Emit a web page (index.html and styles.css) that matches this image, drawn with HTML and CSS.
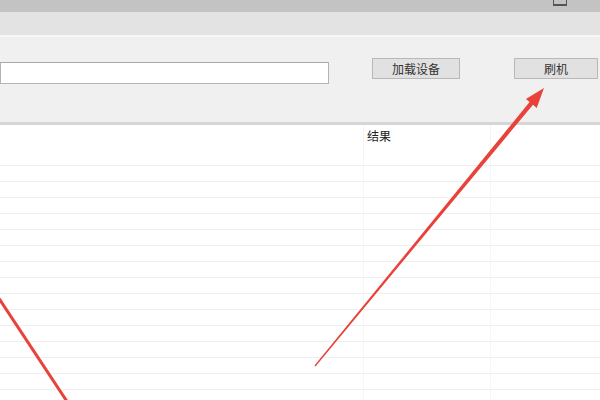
FILE: index.html
```html
<!DOCTYPE html>
<html lang="zh-CN">
<head>
    <meta charset="UTF-8">
    <meta name="viewport" content="width=device-width, initial-scale=1.0">
    <title>刷机工具</title>
    <link rel="stylesheet" href="styles.css">
</head>
<body>

<div class="window">
    <div class="titlebar">
        <span class="max-btn"></span>
    </div>
    <div class="menubar"></div>

    <div class="panel">
        <input type="text" class="path-input">
        <button class="btn btn-load">加载设备</button>
        <button class="btn btn-flash">刷机</button>
    </div>

    <table class="results">
        <thead>
            <tr>
                <th class="col-main"></th>
                <th class="col-result">结果</th>
                <th class="col-extra"></th>
            </tr>
        </thead>
        <tbody>
            <!-- linhas vazias -->
            <tr><td></td><td></td><td></td></tr>
            <tr><td></td><td></td><td></td></tr>
            <tr><td></td><td></td><td></td></tr>
            <tr><td></td><td></td><td></td></tr>
            <tr><td></td><td></td><td></td></tr>
            <tr><td></td><td></td><td></td></tr>
            <tr><td></td><td></td><td></td></tr>
            <tr><td></td><td></td><td></td></tr>
            <tr><td></td><td></td><td></td></tr>
            <tr><td></td><td></td><td></td></tr>
            <tr><td></td><td></td><td></td></tr>
            <tr><td></td><td></td><td></td></tr>
            <tr><td></td><td></td><td></td></tr>
            <tr><td></td><td></td><td></td></tr>
            <tr><td></td><td></td><td></td></tr>
        </tbody>
    </table>

    <!-- setas vermelhas por cima da janela -->
    <svg class="arrows" width="600" height="400" viewBox="0 0 600 400">
        <polygon points="314.5,365.6 529.6,102 525.9,99 544,88 536.7,107.9 533,104.8 315.5,366.4" fill="#e8423a"/>
        <line x1="-6" y1="291" x2="70" y2="406" stroke="#e8423a" stroke-width="3"/>
    </svg>
</div>

</body>
</html>
```

FILE: styles.css
```css
body {
    margin: 0;
    font-family: "Noto Sans CJK SC", "Liberation Sans", sans-serif;
    background-color: #ffffff;
    color: #222222;
}
.window {
    position: relative;
    width: 600px;
    height: 400px;
    overflow: hidden;
    background-color: #ffffff;
}
.titlebar {
    height: 12px;
    background-color: #c3c3c3;
    display: flex;
    justify-content: flex-end;
    overflow: hidden;
}
.max-btn {
    width: 12px;
    height: 10px;
    margin-top: -7px;
    margin-right: 33px;
    border: 1px solid #555555;
    border-bottom-width: 2px;
}
.menubar {
    height: 23px;
    background-color: #e3e3e3;
    border-bottom: 2px solid #f7f7f7;
}
.panel {
    height: 88px;
    background-color: #f0f0f0;
    border-bottom: 3px solid #d6d6d6;
    display: flex;
    align-items: flex-start;
    box-sizing: border-box;
}
.path-input {
    width: 329px;
    height: 22px;
    margin-top: 25px;
    padding: 0;
    box-sizing: border-box;
    border: 1px solid #b4b4b4;
    border-top-color: #a8a8a8;
    background-color: #ffffff;
    outline: none;
}
.btn {
    height: 21px;
    margin-top: 21px;
    padding: 0;
    box-sizing: border-box;
    border: 1px solid #b8b8b8;
    background-color: #e1e1e1;
    font-family: "Noto Sans CJK SC", sans-serif;
    font-size: 12px;
    line-height: 18px;
    color: #333333;
}
.btn-load {
    width: 88px;
    margin-left: 43px;
}
.btn-flash {
    width: 84px;
    margin-left: 54px;
}
.results {
    width: 600px;
    border-collapse: collapse;
    table-layout: fixed;
}
.results th {
    height: 40px;
    padding: 0 0 0 3px;
    text-align: left;
    vertical-align: top;
    font-weight: normal;
    font-size: 12px;
    line-height: 22px;
    color: #222222;
    border-bottom: 1px solid #efefef;
    border-left: 1px solid #f4f4f4;
}
.results td {
    height: 15px;
    padding: 0;
    border-bottom: 1px solid #efefef;
    border-left: 1px solid #f6f6f6;
}
.results th:first-child,
.results td:first-child {
    border-left: none;
}
.col-main {
    width: 360px;
}
.col-result {
    width: 123px;
}
.arrows {
    position: absolute;
    left: 0;
    top: 0;
    pointer-events: none;
}
```
